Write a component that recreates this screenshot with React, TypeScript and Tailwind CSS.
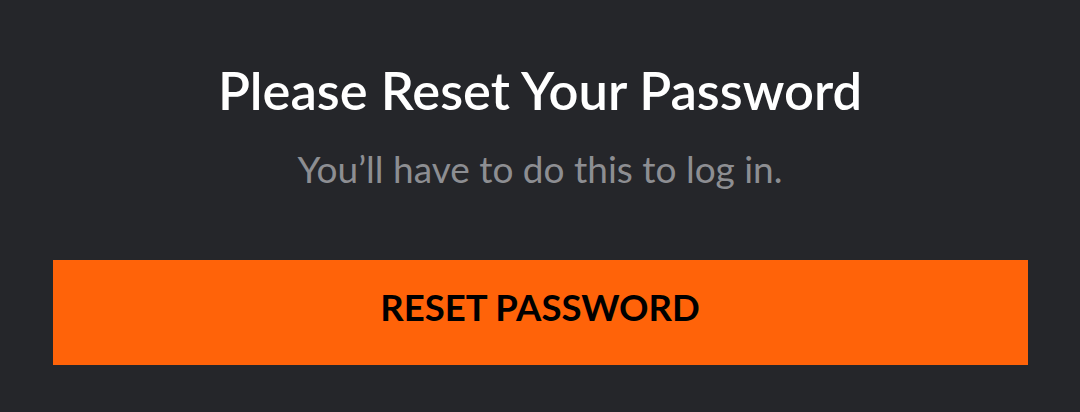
export default function App() {
  return (
    <div className="w-[1080px] h-[412px] bg-[#25262a] font-['Lato','Liberation_Sans',sans-serif] flex flex-col items-center">
      <h1 className="mt-[58px] text-white text-[52.5px] leading-[64px] font-semibold">
        Please Reset Your Password
      </h1>
      <p className="mt-[24px] text-[#8d8e92] text-[37px] leading-[46px]">
        You’ll have to do this to log in.
      </p>
      <button className="mt-[68px] w-[975px] h-[105px] pb-[10px] bg-[#ff6309] text-black text-[36.5px] font-bold">
        RESET PASSWORD
      </button>
    </div>
  );
}
